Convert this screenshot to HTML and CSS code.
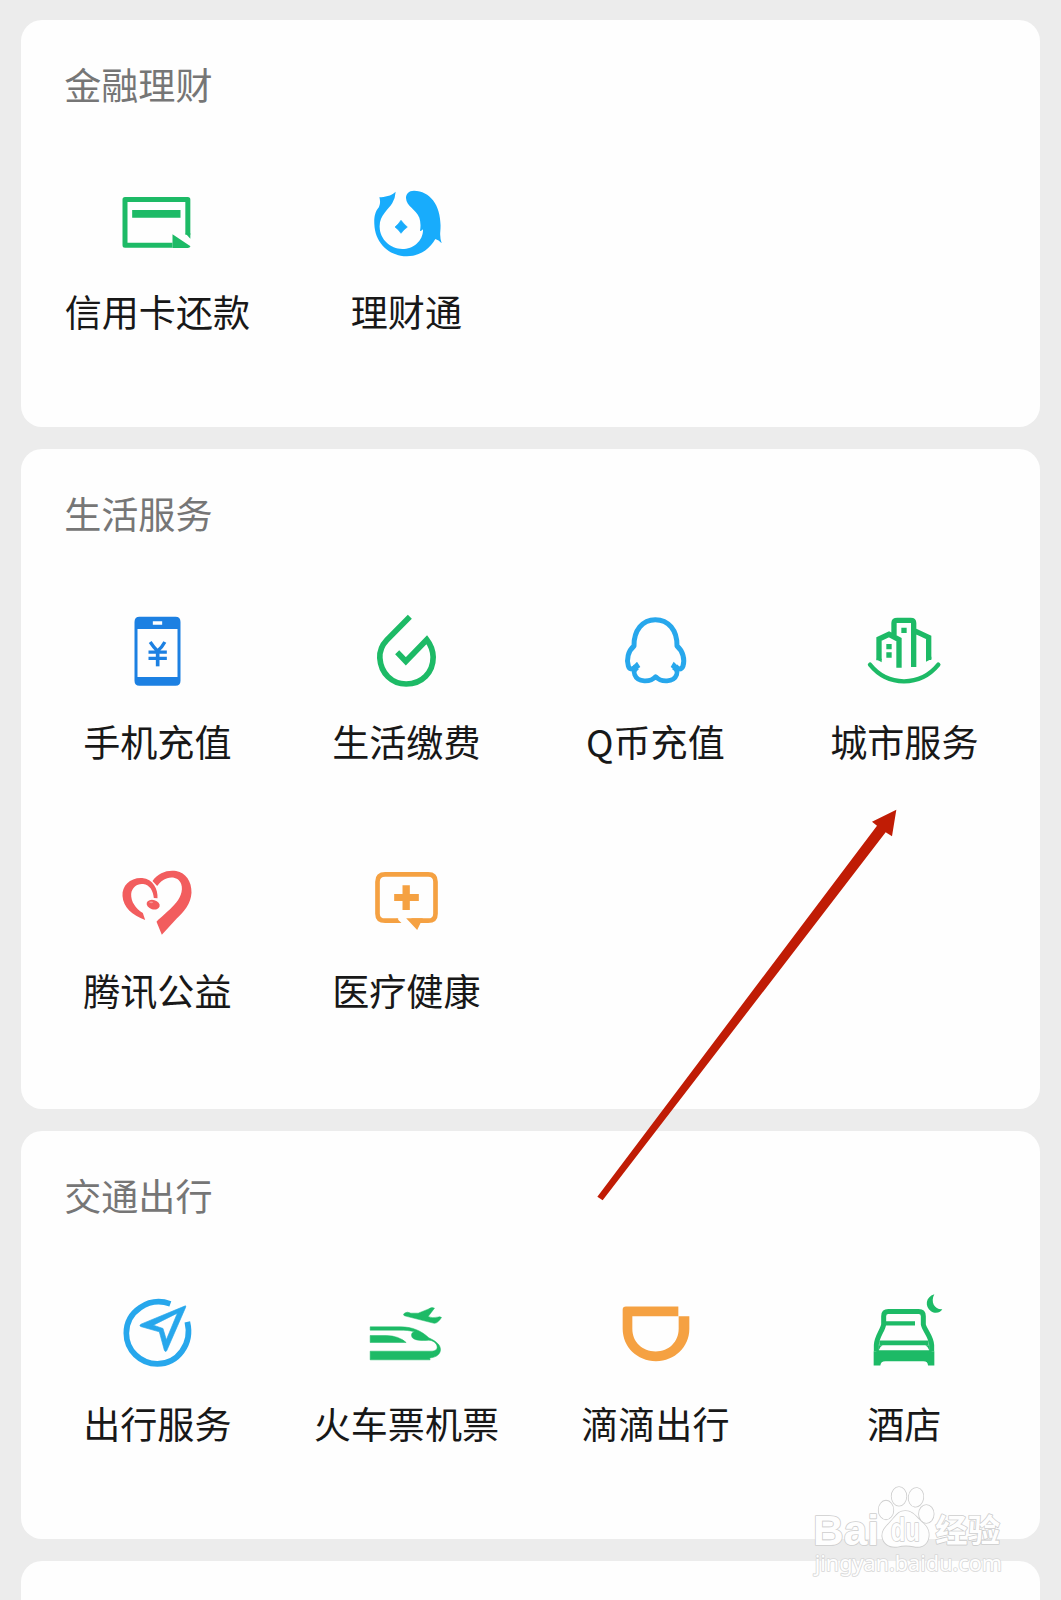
FILE: index.html
```html
<!DOCTYPE html>
<html lang="zh-CN">
<head>
<meta charset="utf-8">
<title>服务</title>
<link rel="stylesheet" href="styles.css">
</head>
<body>
<main class="page">
  <section class="card">
    <h2 class="card-title">金融理财</h2>
    <div class="grid">
      <div class="item">
        <svg class="icon green" viewBox="19.5 0 300 300">
          <path class="line" stroke-width="15" stroke-linejoin="round" d="M216 226H73.500V88.500H262V194"/>
          <path d="M95 120H240V143H95ZM216 193L270 229Q268 234 262 234H216ZM254.500 190L269.500 206V190Z"/>
        </svg>
        <span class="label">信用卡还款</span>
      </div>
      <div class="item">
        <svg class="icon sky" viewBox="767 0 300 300">
          <path d="M886 65C872 79 853 80 837 82Q842 96 836 111C823 126 821 144 822 163C824 218 865 259 920 259C957 258 988 238 1005 207Q1015 210 1024 220Q1018 203 1020 183C1026 112 993 63 941 62C925 62 917 72 917 84C918 110 947 117 957 143Q963 161 959 183Q963 184 968 178C969 212 939 237 906 237C870 237 839 208 838 172C836 137 864 119 876 99Q885 83 886 65Z"/>
          <path d="M902 151Q910 162 921 171Q910 179 902 190Q895 179 884 171Q895 162 902 151Z" stroke="currentColor" stroke-width="2"/>
        </svg>
        <span class="label">理财通</span>
      </div>
    </div>
  </section>

  <section class="card card-tall">
    <h2 class="card-title">生活服务</h2>
    <div class="grid">
      <div class="item">
        <svg class="icon blue" viewBox="-10.5 0 300 300">
          <path fill-rule="evenodd" d="M87 50H195Q210 50 210 66V242Q210 257 195 257H87Q72 257 72 242V66Q72 50 87 50ZM81 87V231H201V87ZM127 64V74H155V64Z"/>
          <path class="line" stroke-width="10" d="M119 126Q131 144 141 153Q154 143 163 126M114 156.500H169M114 175H169"/>
          <path class="line" stroke-width="11" d="M141.500 150V199"/>
        </svg>
        <span class="label">手机充值</span>
      </div>
      <div class="item">
        <svg class="icon green" viewBox="738.5 0 300 300">
          <path class="line" stroke-width="17" d="M900 50L831 120C813 139 809 155 810 174C813 220 846 252 889 252C937 252 970 217 970 171Q969 142 951 119L888 184L862 157"/>
        </svg>
        <span class="label">生活缴费</span>
      </div>
      <div class="item">
        <svg class="icon azure" viewBox="15 0 300 300">
          <path class="line" stroke-width="14" stroke-linejoin="round" d="M113 202Q98 210 104 224C113 248 151 248 167 230C183 248 221 248 230 224Q235 211 220 202"/>
          <path class="line" stroke-width="15" stroke-linejoin="round" d="M108 198C99 209 89 210 85 198C79 179 84 153 102 138C101 91 128 59 166 59C205 59 232 91 231 138C249 153 255 179 249 198C244 210 234 209 226 198"/>
          <path d="M111 185L121 201L103 214L90 207ZM221 185L212 201L230 214L243 207Z"/>
        </svg>
        <span class="label">Q币充值</span>
      </div>
      <div class="item">
        <svg class="icon green" viewBox="762 0 300 300">
          <path class="line" stroke-width="16" d="M837 181V117L867 103L897 119V203M882 107V69Q882 61 892 61H932Q941 61 941 69V201M941 91L986 112V180"/>
          <path class="line" stroke-width="13" stroke-linecap="round" d="M810 194C863 260 960 261 1015 194"/>
          <path d="M904 83H920V99H904ZM859 132H875V148H859ZM859 157H875V173H859ZM829 178L845 187V176H829ZM978 185L994 177V170H978Z"/>
        </svg>
        <span class="label">城市服务</span>
      </div>
      <div class="item">
        <svg class="icon coral" viewBox="-10.5 -2 300 300">
          <path d="M126 94C143 69 171 60 197 64C226 69 244 96 243 129C241 162 221 186 198 207L154 255L138 216C151 203 176 183 190 167C209 148 219 123 212 103C206 86 187 80 170 86Q151 93 140 109Z"/>
          <path d="M141 146C143 119 128 88 95 85C60 83 34 107 36 139C38 173 65 197 104 211L97 190C75 176 61 156 62 133C64 113 80 101 98 103C118 105 128 124 130 145Z"/>
          <ellipse cx="128" cy="165" rx="20" ry="14" transform="rotate(16 128 165)"/>
          <ellipse class="shine" cx="122" cy="158" rx="6" ry="2.5"/>
        </svg>
        <span class="label">腾讯公益</span>
      </div>
      <div class="item">
        <svg class="icon orange" viewBox="738.5 -2 300 300">
          <path class="line" stroke-width="14" d="M865 213H826Q803 213 803 192V96Q803 74 826 74H955Q977 74 977 96V192Q977 213 955 213H905"/>
          <path d="M878 107H900V133H927V154H900V181H878V154H853V133H878ZM889 206H939L922 241ZM860 206L875 220H860Z"/>
        </svg>
        <span class="label">医疗健康</span>
      </div>
    </div>
  </section>

  <section class="card">
    <h2 class="card-title">交通出行</h2>
    <div class="grid">
      <div class="item">
        <svg class="icon azure" viewBox="-10 4.5 300 300">
          <path class="line" stroke-width="17" d="M180 70C115 47 48 94 48 158C48 209 90 250 141 250C202 250 247 191 231 124"/>
          <path fill-rule="evenodd" d="M225 76Q227 75 226 80L169 211Q165 216 162 209L147 154L91 138Q86 134 92 131ZM201 98L129 134L158 144L168 178Z" stroke="currentColor" stroke-width="2"/>
        </svg>
        <span class="label">出行服务</span>
      </div>
      <div class="item">
        <svg class="icon green" viewBox="738.5 4.5 300 300">
          <path d="M781 139H872C909 139 934 151 957 172C981 183 992 194 992 208C991 222 979 230 963 232Q957 234 961 238H781V212H963C974 212 982 208 982 200C982 188 968 179 957 179C936 181 906 181 905 165Q904 156 914 154C900 150 885 149 870 149H781ZM781 165H830Q867 166 889 186H781ZM884 98Q892 92 903 98L925 98L955 86Q965 78 974 83L955 108Q966 114 983 110Q991 107 995 111C987 123 979 132 967 127L884 106Q878 102 884 98Z" stroke="currentColor" stroke-width="1.500"/>
        </svg>
        <span class="label">火车票机票</span>
      </div>
      <div class="item">
        <svg class="icon orange" viewBox="15 4.5 300 300">
          <path fill-rule="evenodd" d="M78 78H235V107H268V145C268 200 224 242 168 242C111 242 68 199 68 145V88Q68 78 78 78ZM97 107V145C97 185 127 213 167 213C207 213 236 184 236 145V107Z"/>
        </svg>
        <span class="label">滴滴出行</span>
      </div>
      <div class="item">
        <svg class="icon green" viewBox="762 4.5 300 300">
          <path class="line" stroke-width="15" d="M829 212V194C830 168 848 150 851 132V107Q851 93 865 93H956Q970 93 970 107V132C974 150 994 168 995 194V212"/>
          <path d="M858 122H945V135H858ZM838 180H986V194H838ZM829 209H995V212H1003V255H984Q984 242 970 242H856Q842 242 841 255H821V212H829Z"/>
          <path d="M836 194H848Q838 199 836 210ZM988 194H976Q986 199 988 210Z"/>
          <path d="M1003 41C976 49 974 78 993 92C1008 102 1023 94 1027 86C1005 88 990 65 1003 41Z"/>
        </svg>
        <span class="label">酒店</span>
      </div>
    </div>
  </section>

  <section class="card"></section>

  <svg class="arrow" viewBox="0 0 1020 1260">
    <path d="M949 59L876 95L891 107L52 1220L68 1231L917 127L936 139Z"/>
  </svg>

  <svg class="watermark" viewBox="0 0 843 420">
    <g class="mark">
      <text class="mark-bai" x="99" y="255" textLength="198" lengthAdjust="spacingAndGlyphs">Bai</text>
      <text class="mark-cn" x="466" y="246" textLength="194" lengthAdjust="spacingAndGlyphs">经验</text>
      <text class="mark-url" x="104" y="332" textLength="562" lengthAdjust="spacingAndGlyphs">jingyan.baidu.com</text>
      <ellipse cx="318" cy="150" rx="22" ry="28"/>
      <ellipse cx="357" cy="109" rx="22" ry="28"/>
      <ellipse cx="408" cy="112" rx="22" ry="28" transform="rotate(8 408 112)"/>
      <ellipse cx="439" cy="162" rx="22" ry="27"/>
      <path d="M376 153C399 153 408 171 424 185C440 198 450 212 445 234C440 257 421 264 400 259Q376 254 352 260C328 263 310 252 307 229C306 209 320 199 333 184C348 168 355 153 376 153Z"/>
      <text class="mark-du" x="332" y="242" textLength="88" lengthAdjust="spacingAndGlyphs">du</text>
    </g>
  </svg>
</main>
</body>
</html>
```
FILE: styles.css
```css
* { box-sizing: border-box; }

html,
body {
  margin: 0;
  height: 1600px;
  overflow: hidden;
}

body {
  background: #ececec;
  font-family: "Noto Sans CJK SC", sans-serif;
}

.page {
  position: relative;
  display: flex;
  flex-direction: column;
  gap: 22px;
  height: 1600px;
  padding: 19.5px 21.4px 0 21.4px;
  overflow: hidden;
}

.card {
  flex: none;
  height: 407.6px;
  padding: 34px 10px 0;
  border-radius: 21px;
  background: #fefefe;
}

.card-tall { height: 660px; }

.card-title {
  margin: 0 0 56.5px 32.8px;
  font-size: 37.1px;
  font-weight: 400;
  line-height: 60px;
  color: #767676;
}

.grid {
  display: grid;
  grid-template-columns: repeat(4, 249px);
  row-gap: 78px;
  margin-left: 0.7px;
}

.item {
  display: flex;
  flex-direction: column;
  align-items: center;
  gap: 11px;
}

.icon {
  width: 100px;
  height: 100px;
  fill: currentColor;
}

.icon .line {
  fill: none;
  stroke: currentColor;
}

.icon .shine { fill: #f79a9a; }

.green { color: #1dba66; }
.sky { color: #18acfc; }
.blue { color: #1c80e2; }
.azure { color: #27a7ec; }
.coral { color: #f25d5e; }
.orange { color: #f5a142; }

.label {
  padding-left: 1.6px;
  font-size: 37.1px;
  line-height: 60px;
  white-space: nowrap;
  color: #181818;
}

.arrow {
  position: absolute;
  left: 580px;
  top: 790px;
  width: 340px;
  height: 420px;
  fill: #c01c05;
}

.watermark {
  position: absolute;
  left: 780px;
  top: 1460px;
  width: 281px;
  height: 140px;
}

.mark {
  fill: #fefefe;
  stroke: #cecece;
  stroke-width: 5;
  stroke-linejoin: round;
  paint-order: stroke;
}

.mark-bai {
  font: 700 127px "Liberation Sans", sans-serif;
}

.mark-du {
  font: 700 98px "Liberation Sans", sans-serif;
}

.mark-cn {
  font: 700 97px "Noto Sans CJK SC", sans-serif;
}

.mark-url {
  font: 400 64px "Noto Sans", sans-serif;
  stroke: #d8d8d8;
}
```
